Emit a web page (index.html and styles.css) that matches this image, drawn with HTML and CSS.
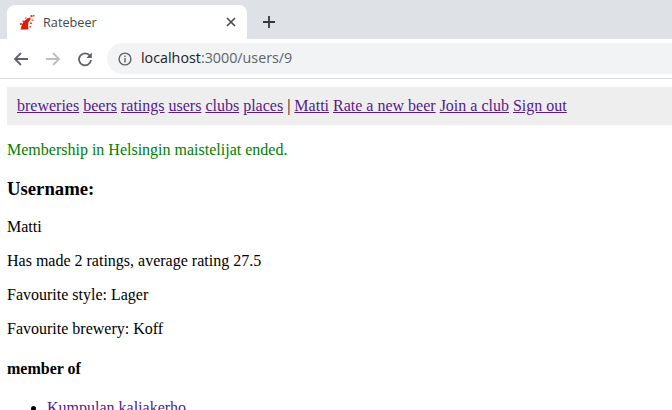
FILE: index.html
```html
<!DOCTYPE html>
<html lang="en">
<head>
<meta charset="utf-8">
<title>Ratebeer</title>
<link rel="stylesheet" href="styles.css">
</head>
<body>
<header class="chrome">
  <div class="tabstrip">
    <div class="tab">
      <svg class="favicon" width="16" height="16" viewBox="0 0 16 16"><path fill="#d81f05" d="M1.500 15.500 L3 10.500 Q5 6 10 3.800 L11.500 3.500 L11.500 5.500 Q8.800 8 9 11 L9.500 15.500 Z"/><path fill="#e4402a" d="M11.500 1h2v2h-2zM14 1h1.500v1.500h-1.500zM12.500 5.500h2v1.200h-2zM11 8.500h2v1.500h-2zM10.500 12h1.500v1.500h-1.500zM1 9h1.800v2h-1.800zM3.500 6.500h1.500v1.500h-1.500zM6 3.500h1.500v1.300h-1.500z"/></svg>
      <span class="tab-title">Ratebeer</span>
      <svg class="tab-close" width="10" height="10" viewBox="0 0 10 10"><path d="M1 1 L9 9 M9 1 L1 9" stroke="#45484c" stroke-width="1.600" fill="none"/></svg>
    </div>
    <svg class="new-tab" width="14" height="14" viewBox="0 0 14 14"><path d="M7 1 V13 M1 7 H13" stroke="#35383c" stroke-width="1.800" fill="none"/></svg>
  </div>
  <div class="toolbar">
    <svg class="tool" width="16" height="16" viewBox="0 0 16 16"><path d="M15 8 H2 M8 2 L2 8 L8 14" stroke="#5f6368" stroke-width="1.800" fill="none"/></svg>
    <svg class="tool" width="16" height="16" viewBox="0 0 16 16"><path d="M1 8 H14 M8 2 L14 8 L8 14" stroke="#bcbec1" stroke-width="1.800" fill="none"/></svg>
    <svg class="tool" width="16" height="16" viewBox="0 0 16 16"><path d="M13 5 A6 6 0 1 0 14 9" stroke="#5f6368" stroke-width="1.800" fill="none"/><path d="M14.800 1.500 V7 H9.300 Z" fill="#5f6368"/></svg>
    <div class="omnibox">
      <svg class="info" width="14" height="14" viewBox="0 0 14 14"><circle cx="7" cy="7" r="5.900" stroke="#5f6368" stroke-width="1.400" fill="none"/><path d="M6.300 3.500h1.400v1.400h-1.400zM6.300 6h1.400v4.500h-1.400z" fill="#5f6368"/></svg>
      <span class="url"><span class="host">localhost</span>:3000/users/9</span>
    </div>
  </div>
</header>
<main class="page">
  <nav class="nav">
    <a href="#">breweries</a> <a href="#">beers</a> <a href="#">ratings</a> <a href="#">users</a> <a href="#">clubs</a> <a href="#">places</a> | <a href="#">Matti</a> <a href="#">Rate a new beer</a> <a href="#">Join a club</a> <a href="#">Sign out</a>
  </nav>
  <p class="notice">Membership in Helsingin maistelijat ended.</p>
  <h2 class="username">Username:</h2>
  <p>Matti</p>
  <p>Has made 2 ratings, average rating 27.5</p>
  <p>Favourite style: Lager</p>
  <p>Favourite brewery: Koff</p>
  <h4 class="member">member of</h4>
  <ul class="clubs">
    <li><a href="#">Kumpulan kaljakerho</a></li>
  </ul>
</main>
</body>
</html>
```
FILE: styles.css
```css
html, body {
  margin: 0;
  padding: 0;
  height: 410px;
  overflow: hidden;
  background: #fff;
}
body {
  font-family: "Liberation Serif", serif;
  font-size: 16px;
  color: #000;
}
.chrome {
  font-family: "Open Sans", sans-serif;
  height: 79px;
  box-sizing: border-box;
  border-bottom: 1px solid #dadce0;
}
.tabstrip {
  height: 39px;
  background: #dee1e6;
  display: flex;
  align-items: flex-end;
  padding-left: 7px;
}
.tab {
  width: 240px;
  height: 34px;
  background: #fff;
  border-radius: 8px 8px 0 0;
  display: flex;
  align-items: center;
  box-sizing: border-box;
  padding: 0 11px 0 12px;
}
.favicon { flex: none; }
.tab-title {
  margin-left: 8px;
  font-size: 12.7px;
  color: #45484c;
  flex: 1;
}
.tab-close { flex: none; }
.new-tab {
  flex: none;
  margin: 0 0 10px 15px;
}
.toolbar {
  height: 39px;
  display: flex;
  align-items: center;
  padding-left: 13px;
}
.tool {
  flex: none;
  margin-right: 16px;
}
.omnibox {
  flex: 1;
  height: 31px;
  margin-left: -2px;
  background: #f1f3f4;
  border-radius: 16px 0 0 16px;
  display: flex;
  align-items: center;
  padding-left: 11px;
}
.info { flex: none; }
.url {
  margin-left: 9px;
  padding-bottom: 2px;
  font-size: 14.3px;
  color: #5f6368;
}
.host { color: #202124; }
.page {
  padding: 8px 0 0 7px;
}
.nav {
  background: #eee;
  padding: 10px;
}
a { color: #551a8b; }
p { margin: 16px 0; }
.notice { color: #008000; }
.username {
  font-size: 18.72px;
  margin: 19px 0 18px;
}
.member {
  font-size: 16px;
  margin: 22px 0 21px;
}
.clubs {
  margin: 16px 0;
  padding-left: 40px;
}
```
